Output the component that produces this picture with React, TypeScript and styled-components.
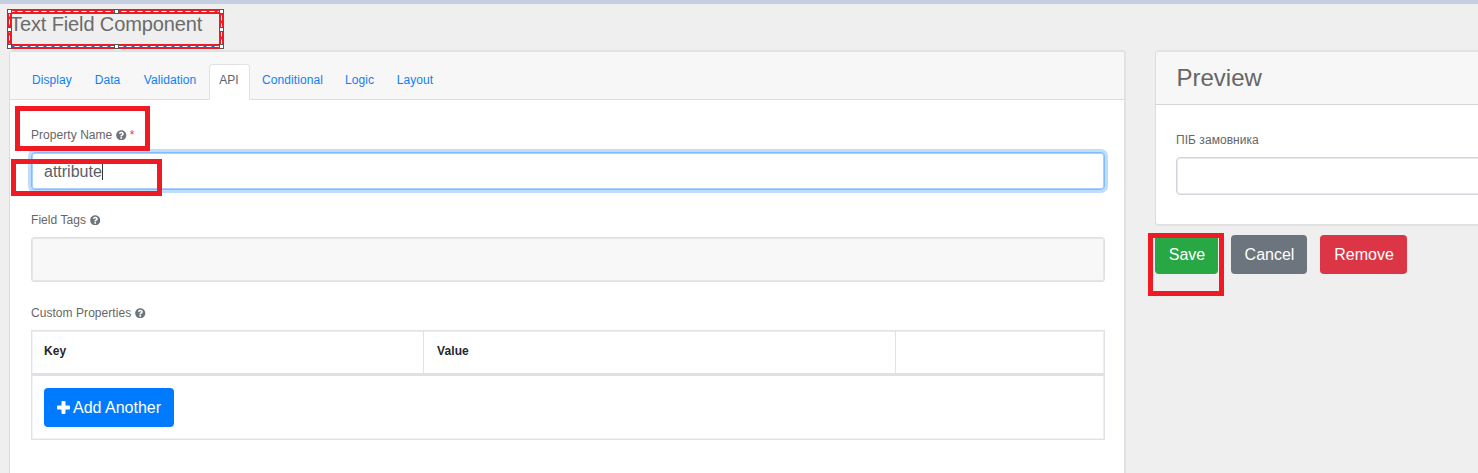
import React from 'react';
import styled, { createGlobalStyle } from 'styled-components';
import { FaQuestionCircle } from 'react-icons/fa';

const GlobalStyle = createGlobalStyle`
  * { box-sizing: border-box; }
  html, body { margin: 0; padding: 0; overflow: hidden; }
  body { background: #efefef; font-family: "Liberation Sans", Arial, sans-serif; color: #666; }
`;

const Page = styled.div`
  position: relative;
  height: 473px;
  overflow: hidden;
  border-top: 4px solid #c6cfe1;
`;

const Title = styled.h1`
  margin: 0;
  height: 46px;
  padding: 7px 0 0 10px;
  font-size: 20px;
  line-height: 26px;
  font-weight: 400;
  letter-spacing: -0.12px;
  color: #6b6b6b;
`;

const Columns = styled.div`
  display: grid;
  grid-template-columns: 1117px 400px;
  column-gap: 29px;
  padding-left: 9px;
  align-items: start;
`;

const Card = styled.section<{ $height: number }>`
  height: ${(p) => p.$height}px;
  background: #fff;
  border: 2px solid #e2e2e2;
  border-left: 1px solid #dcdcdc;
  border-radius: 4px;
  overflow: hidden;
`;

const Tabs = styled.nav`
  display: flex;
  align-items: flex-end;
  height: 48px;
  padding-left: 11px;
  background: #f7f7f7;
  border-bottom: 1px solid #dcdcdc;
`;

const Tab = styled.a<{ $width: number; $active?: boolean }>`
  width: ${(p) => p.$width}px;
  height: 36px;
  padding-left: 1px;
  text-align: center;
  font-size: 12px;
  line-height: 31px;
  letter-spacing: 0.08px;
  margin-bottom: -1px;
  border: 1px solid transparent;
  border-radius: 4px 4px 0 0;
  color: #0f7ff5;
  ${(p) => p.$active && 'margin-left: 2px; padding: 0 1px 0 0; color: #5c636a; background: #fff; border-color: #dee2e6 #dee2e6 #fff;'}
`;

const Form = styled.div`
  padding: 27px 19px 0 21px;
`;

const Label = styled.label<{ $top?: number }>`
  display: flex;
  align-items: center;
  height: 16px;
  margin: ${(p) => p.$top ?? 0}px 0 9px;
  font-size: 12px;
  letter-spacing: 0.05px;
  color: #666;
  svg { margin-left: 4px; color: #6c757d; font-size: 10.5px; }
`;

const Required = styled.span`
  margin-left: 3px;
  color: #eb3b3b;
`;

const TextInput = styled.div<{ $focused?: boolean }>`
  display: flex;
  height: 38px;
  padding: 0 12px;
  font-size: 16px;
  line-height: 37px;
  color: #5a6067;
  background: #fff;
  border: 1px solid ${(p) => (p.$focused ? '#80bdff' : '#ced4da')};
  border-radius: 4px;
  box-shadow: ${(p) => (p.$focused ? 'inset 0 0 0 1px #a8d1ff, 0 0 0 3px #bfdeff' : 'inset 0 0 0 1px #e6e9ed')};
`;

const Caret = styled.i`
  width: 1px;
  height: 16px;
  margin-top: 11px;
  background: #333;
`;

const TagsInput = styled.div`
  height: 45px;
  background: #f8f8f8;
  border: 1px solid #e0e0e0;
  border-radius: 3px;
  box-shadow: inset 0 0 0 1px #e6e6e6;
`;

const Table = styled.div`
  border: 1px solid #dee2e6;
  box-shadow: inset -1px 1px 0 #eceff1, inset 1px -1px 0 #f1f3f5;
`;

const HeadRow = styled.div`
  display: grid;
  grid-template-columns: 391px 472px 1fr;
  height: 45px;
  border-bottom: 3px solid #dee2e6;
`;

const HeadCell = styled.div`
  padding-left: 12px;
  font-size: 12px;
  font-weight: 700;
  line-height: 40px;
  letter-spacing: 0.1px;
  color: #24282c;
  & + & { padding-left: 13px; border-left: 1px solid #dee2e6; }
`;

const FootRow = styled.div`
  height: 63px;
  padding: 12px;
`;

const Button = styled.button<{ $color: string; $width: number }>`
  display: flex;
  align-items: center;
  justify-content: center;
  gap: 3px;
  width: ${(p) => p.$width}px;
  height: 39px;
  padding: 0;
  border: 0;
  border-radius: 4px;
  font: 16px "Liberation Sans", Arial, sans-serif;
  color: #fff;
  background: ${(p) => p.$color};
`;

const PreviewHeader = styled.h2`
  margin: 0;
  height: 53px;
  padding-left: 20.5px;
  font-size: 24px;
  line-height: 51px;
  font-weight: 400;
  color: #666;
  background: #f7f7f7;
  border-bottom: 1px solid #d5d5d5;
`;

const PreviewBody = styled.div`
  padding: 27px 20px 0;
`;

const Actions = styled.div`
  display: flex;
  gap: 13px;
  margin-top: 9px;
  ${Button} { padding-left: 1px; }
`;

const Highlight = styled.div<{ $x: number; $y: number; $w: number; $h: number }>`
  position: absolute;
  left: ${(p) => p.$x}px;
  top: ${(p) => p.$y - 4}px;
  width: ${(p) => p.$w}px;
  height: ${(p) => p.$h}px;
  border: 5px solid #ee1b24;
`;

const Selection = styled.svg`
  position: absolute;
  left: 0;
  top: -4px;
`;

const PlusIcon = () => (
  <svg width="13" height="13" viewBox="0 0 13 13" fill="currentColor">
    <path d="M5.4 0h2.2q.9 0 .9.9v3.6h3.6q.9 0 .9.9v2.2q0 .9-.9.9H8.500v3.6q0 .9-.9.9H5.400q-.9 0-.9-.9V8.500H.9q-.9 0-.9-.9V5.400q0-.9.9-.9h3.600V.9q0-.9.9-.9z" />
  </svg>
);

const handles = [
  [9.5, 11.5], [116.5, 11.5], [221.5, 11.5],
  [9.5, 29.5], [221.5, 29.5],
  [9.5, 46.5], [116.5, 46.5], [221.5, 46.5],
];

const tabs: [string, number][] = [
  ['Display', 61], ['Data', 50], ['Validation', 75], ['API', 41],
  ['Conditional', 84], ['Logic', 50], ['Layout', 61],
];

export default function App() {
  return (
    <>
      <GlobalStyle />
      <Page>
        <Title>Text Field Component</Title>
        <Columns>
          <Card $height={440}>
            <Tabs>
              {tabs.map(([name, width]) => (
                <Tab key={name} $width={width} $active={name === 'API'}>{name}</Tab>
              ))}
            </Tabs>
            <Form>
              <Label>Property Name<FaQuestionCircle /><Required>*</Required></Label>
              <TextInput $focused>attribute<Caret /></TextInput>
              <Label $top={22}>Field Tags<FaQuestionCircle /></Label>
              <TagsInput />
              <Label $top={23}>Custom Properties<FaQuestionCircle /></Label>
              <Table>
                <HeadRow>
                  <HeadCell>Key</HeadCell>
                  <HeadCell>Value</HeadCell>
                  <HeadCell />
                </HeadRow>
                <FootRow>
                  <Button $color="#007bff" $width={130}><PlusIcon />Add Another</Button>
                </FootRow>
              </Table>
            </Form>
          </Card>
          <div>
            <Card $height={176}>
              <PreviewHeader>Preview</PreviewHeader>
              <PreviewBody>
                <Label>ПІБ замовника</Label>
                <TextInput />
              </PreviewBody>
            </Card>
            <Actions>
              <Button $color="#28a745" $width={63}>Save</Button>
              <Button $color="#6c757d" $width={76}>Cancel</Button>
              <Button $color="#dc3545" $width={87}>Remove</Button>
            </Actions>
          </div>
        </Columns>
        <Highlight $x={15} $y={106} $w={135} $h={45} />
        <Highlight $x={11} $y={159} $w={151} $h={37} />
        <Highlight $x={1148} $y={233} $w={76} $h={63} />
        <Selection width="230" height="52" fill="none">
          <rect x="9.5" y="11.5" width="212" height="35" stroke="#ee1b24" strokeWidth="5" />
          <rect x="9.5" y="11.5" width="212" height="35" stroke="#1673c8" />
          <path d="M9.500 11.500H221.500V46.500M9.500 11.500V46.500H221.500" stroke="#fff" strokeDasharray="5 3" />
          {handles.map(([x, y]) => (
            <rect key={`${x}-${y}`} x={x - 2} y={y - 2} width="4" height="4" fill="#fff" stroke="#555" />
          ))}
        </Selection>
      </Page>
    </>
  );
}
